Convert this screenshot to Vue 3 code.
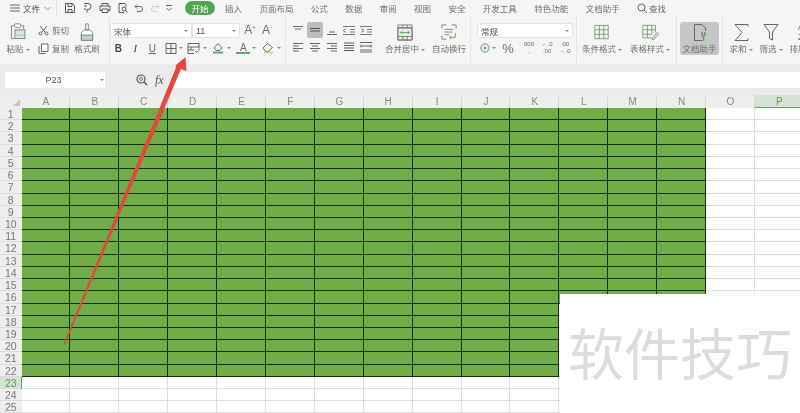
<script setup>
const tabs = ['插入', '页面布局', '公式', '数据', '审阅', '视图', '安全', '开发工具', '特色功能', '文档助手']
const cols = 'ABCDEFGHIJKLMNOP'.split('')
const rows = Array.from({ length: 26 }, (_, i) => i + 1)
const isGreen = (r, c) => (r <= 16 && c < 14) || (r <= 22 && c < 11)
</script>

<template>
  <div class="app">
    <header class="title">
      <svg class="menu" width="10" height="8" viewBox="0 0 10 8"><path d="M0 1h10M0 4h10M0 7h10" stroke="#666" /></svg>
      <span class="file">文件</span>
      <svg class="chev" width="7" height="5" viewBox="0 0 7 5"><path d="M.5 1l3 3 3-3" fill="none" stroke="#999" /></svg>
      <i class="vsep"></i>
      <div class="quick">
        <svg width="12" height="12" viewBox="0 0 12 12"><path d="M1.500 1.500h7l2 2v7h-9zM4 1.500v3h4v-3M4 10.500v-3h4v3" fill="none" stroke="#555" /></svg>
        <svg width="12" height="12" viewBox="0 0 12 12"><path d="M2 1.500h4a3 3 0 0 1 0 6H5v3M2 4h3M2 7h2" fill="none" stroke="#555" /></svg>
        <svg width="12" height="12" viewBox="0 0 12 12"><path d="M3 4V1.500h6V4M3 8.500H1V4h10v4.500H9M3 7h6v3.500H3z" fill="none" stroke="#555" /></svg>
        <svg width="12" height="12" viewBox="0 0 12 12"><path d="M7 10.500H2v-9h6l1 1v2" fill="none" stroke="#555" /><circle cx="7" cy="7" r="2" fill="none" stroke="#555" /><path d="M8.500 8.500l2 2" stroke="#555" /></svg>
        <svg width="10" height="10" viewBox="0 0 10 10"><path d="M1 3.500h5a2.500 2.500 0 0 1 0 5H3M1 3.500l2-2M1 3.500l2 2" fill="none" stroke="#666" /></svg>
        <svg width="10" height="10" viewBox="0 0 10 10"><path d="M9 3.500H4a2.500 2.500 0 0 0 0 5h3M9 3.500l-2-2M9 3.500l-2 2" fill="none" stroke="#ccc" /></svg>
        <svg width="8" height="8" viewBox="0 0 8 8"><path d="M1 1.500h6M1.500 4l2.500 2.500L6.500 4" fill="none" stroke="#666" /></svg>
      </div>
      <span class="pill">开始</span>
      <nav class="tabs">
        <span v-for="t in tabs" :key="t">{{ t }}</span>
        <span class="find">
          <svg width="11" height="11" viewBox="0 0 11 11"><circle cx="4.500" cy="4.500" r="3.500" fill="none" stroke="#666" /><path d="M7 7l3 3" stroke="#666" /></svg>查找
        </span>
      </nav>
    </header>

    <section class="ribbon">
      <div class="group clip">
        <div class="big w-paste">
          <svg width="18" height="20" viewBox="0 0 18 22"><path d="M4 3H1.500v15H5M13 3h2.500v4" fill="none" stroke="#777" /><rect x="5" y="1" width="7" height="4" rx="1" fill="#fff" stroke="#777" /><rect x="5.500" y="8" width="11.500" height="10" fill="#d9eadb" stroke="#777" /><path d="M5.500 14h11.500" stroke="#8fbf94" /></svg>
          <span class="lb">粘贴<b class="car"></b></span>
        </div>
        <div class="cutcopy">
          <span class="mini"><svg width="11" height="11" viewBox="0 0 11 11"><circle cx="2.500" cy="8.500" r="1.500" fill="none" stroke="#666" /><circle cx="8.500" cy="8.500" r="1.500" fill="none" stroke="#666" /><path d="M3.500 7.500L9 1M7.500 7.500L2 1" stroke="#666" fill="none" /></svg>剪切</span>
          <span class="mini"><svg width="11" height="11" viewBox="0 0 11 11"><path d="M3.500 1h6.500v7.500H3.500z" fill="#fff" stroke="#666" /><path d="M1 3v7.500h6.500" fill="none" stroke="#666" /></svg>复制</span>
        </div>
        <div class="big w-brush">
          <svg width="16" height="20" viewBox="0 0 16 22"><path d="M6.500 1h3v7h-3zM1.500 11l3-3h7l3 3v9h-13z" fill="#fff" stroke="#777" /><path d="M1.500 14h13v6h-13z" fill="#bcdcc0" stroke="#777" /></svg>
          <span class="lb">格式刷</span>
        </div>
      </div>

      <div class="group font">
        <div class="row r1">
          <div class="combo c-font">宋体<b class="car"></b></div>
          <div class="combo c-size">11<b class="car"></b></div>
          <span class="aa">A<sup>+</sup></span><span class="aa">A<sup>-</sup></span>
        </div>
        <div class="row r2">
          <span class="t bold">B</span><span class="t ital">I</span><span class="t und">U</span>
          <span class="dd first"><svg width="12" height="11" viewBox="0 0 12 11"><path d="M1 .5h10v10H1zM1 5.500h10M6 .5v10" fill="none" stroke="#666" /></svg><b class="car"></b></span>
          <span class="dd"><svg width="14" height="11" viewBox="0 0 14 11"><path d="M7 10.500H1V.5h11v5M1 4h11M1 7h6M4 4v3" fill="none" stroke="#666" /><path d="M8 8l1.500 1.500L13 6" fill="none" stroke="#5a9e5c" /></svg><b class="car"></b></span>
          <span class="dd"><svg width="14" height="12" viewBox="0 0 14 12"><path d="M3 6l4-4.500 4 4.500-2.500 2.500h-3z" fill="none" stroke="#666" /><path d="M2 10.500h10" stroke="#5dab5f" stroke-width="2" /></svg><b class="car"></b></span>
          <span class="dd"><span class="fa">A</span><b class="car"></b></span>
          <span class="dd"><svg width="14" height="12" viewBox="0 0 14 12"><path d="M2 6l4.500-4.500 5 4-4 4h-3z" fill="none" stroke="#666" /><path d="M3 10.500h9" stroke="#e4c86a" stroke-width="1.500" /></svg><b class="car"></b></span>
        </div>
      </div>

      <div class="group align">
        <div class="agrid">
          <svg class="a" viewBox="0 0 14 12"><path d="M2 2.500h10M4 5h6" stroke="#666" /></svg>
          <span class="hl"><svg class="a" viewBox="0 0 14 12"><path d="M2 4.500h10M2 7h10" stroke="#555" /></svg></span>
          <svg class="a" viewBox="0 0 14 12"><path d="M4 8h6M2 10.500h10" stroke="#666" /></svg>
          <svg class="a" viewBox="0 0 14 12"><path d="M1 2.500h12M8 5.500h5M8 8h5M1 10.500h12M1 6.500l3-2M1 6.500l3 2" fill="none" stroke="#777" /></svg>
          <svg class="a" viewBox="0 0 14 12"><path d="M1 2.500h12M8 5.500h5M8 8h5M1 10.500h12M5 6.500l-3-2M5 6.500l-3 2" fill="none" stroke="#777" /></svg>
          <svg class="a" viewBox="0 0 14 12"><path d="M2 2.500h10M2 5h6M2 7.500h10M2 10h6" stroke="#666" /></svg>
          <svg class="a" viewBox="0 0 14 12"><path d="M2 2.500h10M4 5h6M2 7.500h10M4 10h6" stroke="#666" /></svg>
          <svg class="a" viewBox="0 0 14 12"><path d="M2 2.500h10M6 5h6M2 7.500h10M6 10h6" stroke="#666" /></svg>
          <svg class="a" viewBox="0 0 14 12"><path d="M2 2h10M2 4.500h10M2 7h10M2 9.500h10" stroke="#555" /></svg>
          <svg class="a" viewBox="0 0 14 12"><path d="M1 1.500h12M1 9h12M1 11h12M2 5h10M2 3.500v3M12 3.500v3" fill="none" stroke="#666" /></svg>
        </div>
        <div class="big w-merge">
          <svg width="16" height="17" viewBox="0 0 18 19"><path d="M1 4h16v14H1z" fill="#e4f0e4" stroke="#777" /><path d="M1 1h16v17H1zM1 4.500h16M1 14h16M6.500 1v3.500M11.500 1v3.500M6.500 14v4M11.500 14v4" fill="none" stroke="#777" /><path d="M4 9.500h10M4 9.500l2-1.500M4 9.500l2 1.500M14 9.500l-2-1.500M14 9.500l-2 1.500" fill="none" stroke="#5a9e5c" /></svg>
          <span class="lb">合并居中<b class="car"></b></span>
        </div>
        <div class="big w-wrap">
          <svg width="16" height="17" viewBox="0 0 18 19"><path d="M1 5V1h5M12 1h5v4M1 13v4h5" fill="none" stroke="#777" /><path d="M4 6h10M4 9h9M4 12h5" stroke="#777" /><path d="M16 10v5h-6M11.500 13l-2 2 2 2" fill="none" stroke="#5a9e5c" /></svg>
          <span class="lb">自动换行</span>
        </div>
      </div>

      <div class="group num">
        <div class="combo c-num">常规<b class="car"></b></div>
        <div class="row numrow">
          <span class="dd"><svg width="12" height="12" viewBox="0 0 12 12"><circle cx="6" cy="6" r="5" fill="#e2efe2" stroke="#777" /><circle cx="6" cy="6" r="1.500" fill="#5a9e5c" /></svg><b class="car"></b></span>
          <span class="pct">%</span>
          <span class="tiny">000<br />,</span>
          <span class="tiny">←.0<br />.00</span>
          <span class="tiny">.00<br />→.0</span>
        </div>
      </div>

      <div class="group styles">
        <div class="big w-style">
          <svg width="16" height="16" viewBox="0 0 18 18"><path d="M1 1h15v15H1z" fill="#eef6ee" stroke="#6f9a72" /><path d="M1 6h15M1 11h15M6 1v15M11 1v15" stroke="#6f9a72" /></svg>
          <span class="lb">条件格式<b class="car"></b></span>
        </div>
        <div class="big w-style">
          <svg width="17" height="16" viewBox="0 0 19 18"><path d="M11 15H1V1h14v8M1 6h14M1 11h10M6 1v14M11 1v10" fill="none" stroke="#6f9a72" /><path d="M12 15l5-6 1.500 1.500-5 6-2 .5z" fill="#fff" stroke="#777" /></svg>
          <span class="lb">表格样式<b class="car"></b></span>
        </div>
      </div>

      <div class="group helper">
        <div class="assist">
          <svg width="14" height="19" viewBox="0 0 14 19"><path d="M9 17.500H1.500v-16H9l3.500 3.500v3" fill="none" stroke="#666" /><path d="M9 9v2.500a1.500 1.500 0 0 0 3 0V9M10.500 13v5" fill="none" stroke="#5a9e5c" stroke-width="1.500" /></svg>
          <span class="lb">文档助手</span>
        </div>
      </div>

      <div class="group last">
        <div class="big w-sum">
          <svg width="15" height="18" viewBox="0 0 15 18"><path d="M14 3V1H1l7 8-7 8h13v-2" fill="none" stroke="#666" /></svg>
          <span class="lb">求和<b class="car"></b></span>
        </div>
        <div class="big w-sum">
          <svg width="16" height="18" viewBox="0 0 16 18"><path d="M1 1h14L9.500 8.500v8l-3-1.500V8.500z" fill="none" stroke="#666" /></svg>
          <span class="lb">筛选<b class="car"></b></span>
        </div>
        <div class="big w-sum">
          <span class="az">A<br />Z</span>
          <span class="lb">排序<b class="car"></b></span>
        </div>
      </div>
    </section>

    <section class="formula">
      <div class="namebox">P23<b class="car"></b></div>
      <svg class="zoomi" width="12" height="12" viewBox="0 0 12 12"><circle cx="5" cy="5" r="4" fill="none" stroke="#555" stroke-width="1.200" /><circle cx="5" cy="5" r="1.500" fill="none" stroke="#777" /><path d="M8 8l3 3" stroke="#555" stroke-width="1.500" /></svg>
      <span class="fx">fx</span>
      <div class="finput"></div>
    </section>

    <section class="sheet">
      <div class="corner"><i></i></div>
      <div v-for="c in cols" :key="c" class="ch" :class="{ on: c === 'P' }">{{ c }}</div>
      <template v-for="r in rows" :key="r">
        <div class="rh" :class="{ on: r === 23 }">{{ r }}</div>
        <div
          v-for="(c, i) in cols"
          :key="c"
          class="cell"
          :class="{ green: isGreen(r, i) }"
        ></div>
      </template>
    </section>

    <div class="mark">软件技巧</div>

    <svg class="arrow" width="800" height="413" viewBox="0 0 800 413">
      <polygon points="185.500,57 175.500,65.500 176,67.500 63.500,344 65,344.500 181,69 186.500,71" fill="#e0493e" />
    </svg>
  </div>
</template>

<style>
html, body { margin: 0; background: #fff; }
</style>

<style scoped>
.app {
  position: relative;
  width: 800px;
  height: 413px;
  overflow: hidden;
  background: #fff;
  font-family: "Noto Sans CJK SC", "Liberation Sans", sans-serif;
  color: #6e6e6e;
  font-size: 8.500px;
  filter: blur(0.3px);
}
.title { height: 16px; display: flex; align-items: center; background: #f5f5f5; }
.menu { margin-left: 10px; }
.file { margin-left: 3px; width: 20px; font-size: 8.500px; color: #555; }
.chev { margin-left: 1px; }
.vsep { width: 1px; height: 14px; background: #ddd; margin-left: 5px; }
.quick { display: flex; align-items: center; gap: 5.500px; margin-left: 7px; width: 121px; }
.pill {
  width: 30px; height: 14px; border-radius: 7px; background: #52a452; color: #fff;
  text-align: center; line-height: 14px; font-size: 8.500px;
}
.tabs { display: flex; gap: 17.400px; margin-left: 10px; align-items: center; white-space: nowrap; }
.find { display: flex; align-items: center; gap: 1px; }
.ribbon { height: 48px; display: flex; background: #f5f5f5; }
.group { height: 48px; display: flex; box-sizing: border-box; flex: none; }
.big { display: flex; flex-direction: column; align-items: center; flex: none; padding-top: 7px; height: 48px; box-sizing: border-box; }
.big svg { height: 19px; flex: none; }
.lb { margin-top: 0; white-space: nowrap; line-height: 12px; font-size: 8.500px; }
.big .lb { margin-top: 0; }
.car {
  display: inline-block; width: 0; height: 0; margin-left: 2px; vertical-align: middle;
  border-left: 2px solid transparent; border-right: 2px solid transparent; border-top: 2px solid #888;
}
.clip { width: 109px; padding-left: 6px; }
.w-paste { width: 24px; }
.cutcopy { display: flex; flex-direction: column; width: 39px; padding: 8px 0 0 8px; box-sizing: border-box; gap: 6px; }
.mini { display: flex; align-items: center; gap: 3px; height: 12px; white-space: nowrap; }
.w-brush { width: 34px; margin-left: 1px; }
.font { width: 176px; flex-direction: column; border-left: 1px solid #e6e6e6; }
.row { display: flex; align-items: center; }
.r1 { height: 15px; margin-top: 7px; }
.combo {
  display: flex; align-items: center; justify-content: space-between; box-sizing: border-box;
  height: 15px; background: #fff; border: 1px solid #e2e2e2; padding: 0 3px; color: #555;
}
.c-font { width: 82px; border-radius: 3px 0 0 3px; }
.c-size { width: 48px; border-radius: 0 3px 3px 0; font-family: "Liberation Sans", sans-serif; font-size: 9px; }
.aa { width: 16px; margin-left: 1px; font-size: 12px; text-align: center; font-family: "Liberation Sans", sans-serif; line-height: 15px; }
.aa:first-of-type { margin-left: 2px; }
.aa sup { font-size: 6px; line-height: 0; }
.r2 { height: 16px; margin-top: 2px; }
.t { width: 17px; text-align: center; font-size: 10px; font-family: "Liberation Sans", sans-serif; color: #444; }
.bold { font-weight: 700; }
.ital { font-style: italic; font-family: "Liberation Serif", serif; font-size: 11px; }
.und { text-decoration: underline; color: #666; }
.dd { display: flex; align-items: center; width: 25px; box-sizing: border-box; padding-left: 1px; }
.dd.first { width: 22px; margin-left: 3px; }
.fa { display: block; width: 14px; text-align: center; font-size: 10px; line-height: 9px; border-bottom: 2px solid #5dab5f; font-family: "Liberation Sans", sans-serif; }
.align { width: 185px; border-left: 1px solid #e6e6e6; padding-left: 3px; }
.agrid {
  display: grid; grid-template-columns: repeat(5, 17.200px); grid-template-rows: 16px 16px;
  row-gap: 1px; padding-top: 6px; justify-items: center; align-items: center; width: 86px;
}
.a { width: 14px; height: 12px; display: block; }
.hl { width: 16px; height: 16px; background: #bdbdbd; border-radius: 2px; display: flex; align-items: center; justify-content: center; }
.w-merge { width: 46px; margin-left: 7px; }
.w-wrap { width: 44px; margin-left: -1px; }
.num { width: 106px; flex-direction: column; border-left: 1px solid #e6e6e6; padding: 7px 0 0 6px; }
.c-num { width: 96px; border-radius: 3px; }
.numrow { margin-top: 2px; height: 16px; gap: 0; }
.numrow .dd { width: 19px; padding-left: 3px; }
.pct { width: 24px; font-size: 13px; text-align: center; font-family: "Liberation Sans", sans-serif; }
.tiny { width: 18px; font-size: 6px; line-height: 7px; text-align: center; font-family: "Liberation Sans", sans-serif; color: #666; }
.styles { width: 100px; border-left: 1px solid #e6e6e6; padding-left: 1px; }
.w-style { width: 48px; }
.helper { width: 46px; border-left: 1px solid #e6e6e6; padding: 6px 0 0 3px; }
.assist {
  width: 39px; height: 33px; background: #c6c6c6; border-radius: 3px; box-sizing: border-box;
  display: flex; flex-direction: column; align-items: center; padding-top: 1px;
}
.last { border-left: 1px solid #e6e6e6; padding-left: 3px; }
.w-sum { width: 30px; }
.az { height: 19px; font-size: 9px; line-height: 9.500px; font-family: "Liberation Sans", sans-serif; }
.formula { height: 31px; display: flex; align-items: flex-start; background: #ebebeb; padding-top: 8px; box-sizing: border-box; }
.namebox {
  width: 100px; height: 16px; margin-left: 5px; background: #fff; border-radius: 2px; box-sizing: border-box;
  display: flex; align-items: center; justify-content: center;
  font-family: "Liberation Sans", sans-serif; font-size: 9px; color: #555; padding-left: 1px;
}
.namebox .car { margin-left: 38px; margin-right: -38px; }
.zoomi { margin: 2px 0 0 31px; }
.fx { margin-left: 7px; width: 16px; font-family: "Liberation Serif", serif; font-style: italic; font-size: 12px; line-height: 16px; color: #555; }
.finput { flex: 1; height: 16px; background: #fff; margin-left: 1px; }
.sheet {
  display: grid;
  grid-template-columns: 21.500px repeat(16, 48.900px);
  grid-template-rows: 13px repeat(26, 12.220px);
  height: 318px;
  overflow: hidden;
}
.corner { background: #eee; position: relative; }
.corner i {
  position: absolute; right: 2px; bottom: 2px; width: 0; height: 0;
  border-left: 7px solid transparent; border-bottom: 7px solid #c4c4c4;
}
.ch {
  background: #eee; text-align: center; font-family: "Liberation Sans", sans-serif;
  font-size: 10px; line-height: 13px; color: #888; box-shadow: inset -1px 0 0 #d6d6d6;
}
.ch.on { background: #d5e3d5; color: #5a9a5a; box-shadow: inset 0 -1px 0 #5da55d; }
.rh {
  background: #eee; text-align: center; font-family: "Liberation Sans", sans-serif;
  font-size: 10.500px; line-height: 12px; color: #777; box-shadow: inset 0 -1px 0 #dcdcdc;
}
.rh.on { background: #d5e3d5; color: #5a9a5a; box-shadow: inset -1px 0 0 #5da55d; }
.cell { background: #fff; box-shadow: inset -1px -1px 0 #dedede; min-width: 0; min-height: 0; }
.cell.green { background: #70ad47; box-shadow: inset -1px -1px 0 #16300c; }
.mark {
  position: absolute; left: 560px; top: 294px; width: 240px; height: 119px; box-sizing: border-box;
  background: #fff; color: #dcdcdc; font-size: 56px; line-height: 1; text-align: center; padding-top: 29px;
  white-space: nowrap;
}
.arrow { position: absolute; left: 0; top: 0; pointer-events: none; }
</style>
